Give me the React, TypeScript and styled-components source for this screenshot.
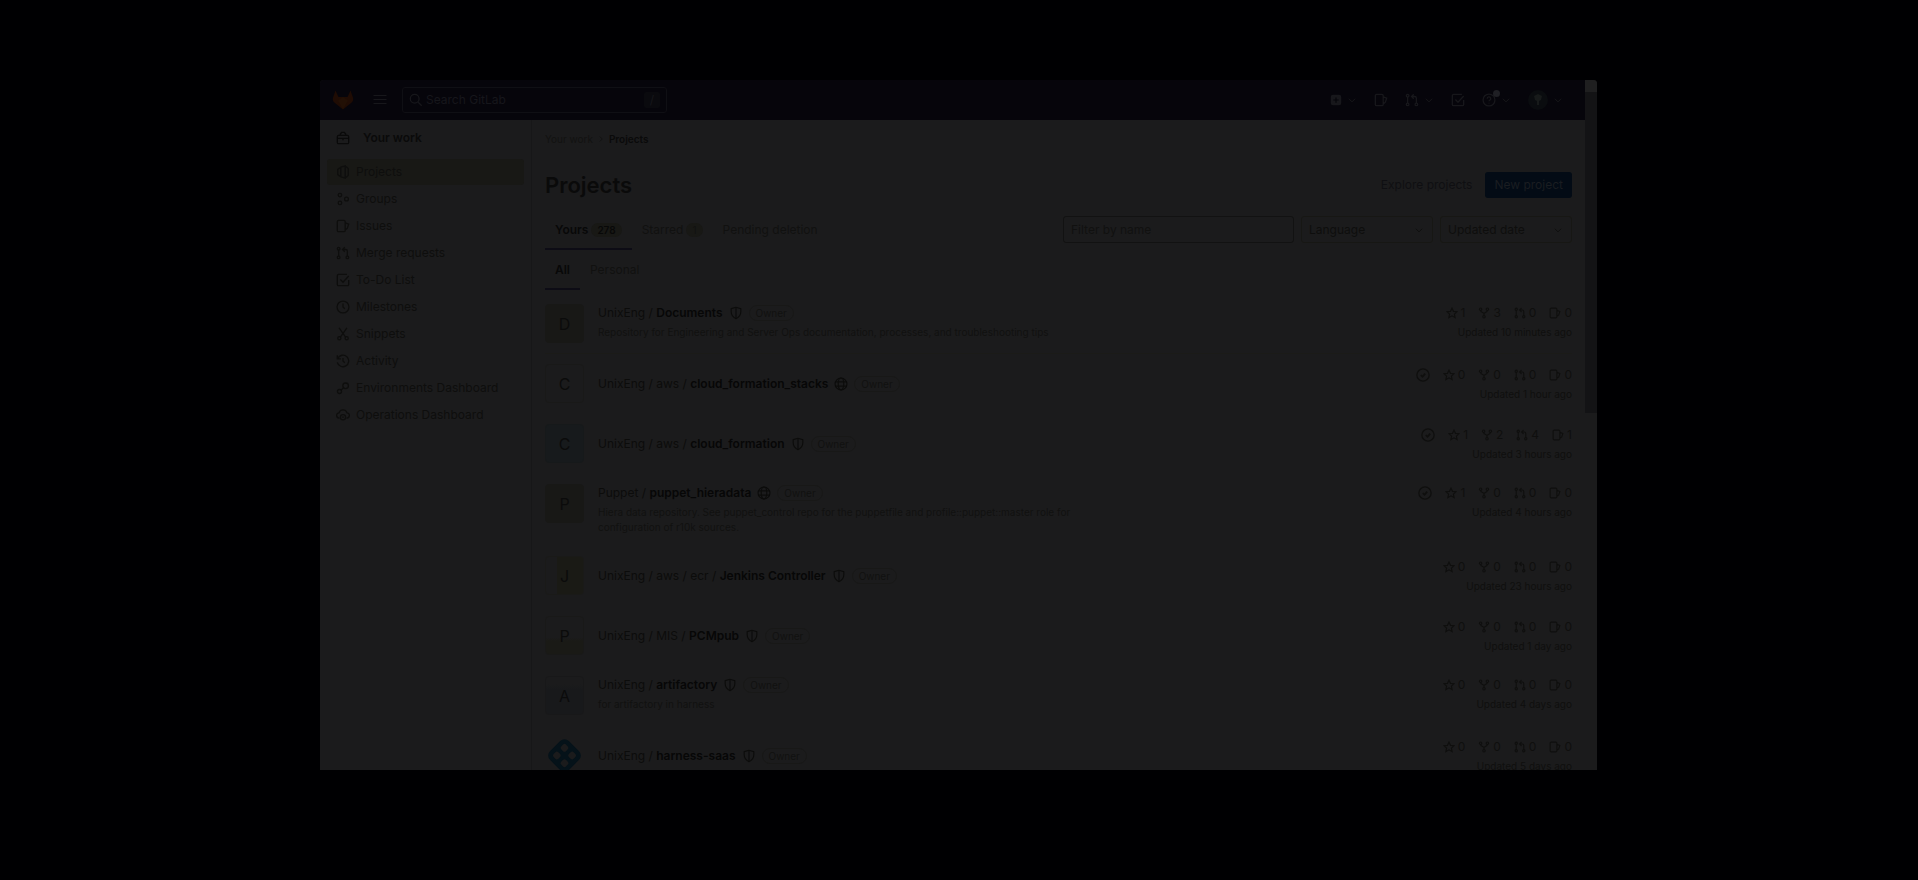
import React from "react";
import styled, { createGlobalStyle } from "styled-components";

const Global = createGlobalStyle`
  *, *::before, *::after { box-sizing: border-box; }
  html, body { margin: 0; background: #000002; }
  body { font-family: Inter, "Liberation Sans", sans-serif; font-size: 12px; line-height: 18px; color: #0c0c0b; }
  a { color: inherit; text-decoration: none; }
  button, input, select { font: inherit; color: inherit; margin: 0; }
  h1, p, ul { margin: 0; padding: 0; }
  ul { list-style: none; }
`;

const Stage = styled.div`
  height: 100vh;
  min-height: 400px;
  padding: 80px 321px 110px 320px;
  background: #000002;
`;

const Window = styled.div`
  height: 100%;
  display: flex;
  overflow: hidden;
  border-radius: 4px 4px 0 0;
  background: #1b1b1c;
`;

const Page = styled.div`
  flex: 1;
  min-width: 0;
  display: flex;
  flex-direction: column;
`;

const Scrollbar = styled.div`
  width: 12px;
  display: flex;
  flex-direction: column;
  background: #1b1b1c;
`;
const ScrollCap = styled.div`
  height: 12px;
  background: #1f1f20;
`;
const ScrollThumb = styled.div`
  height: 321px;
  background: #131315;
`;

const Header = styled.header`
  flex: none;
  height: 40px;
  display: flex;
  align-items: center;
  padding: 0 22px 0 11px;
  background: #06050b;
  color: #17171b;
`;
const LogoLink = styled.a`
  display: flex;
  width: 24px;
  margin-right: 17px;
`;
const IconButton = styled.button`
  display: flex;
  align-items: center;
  gap: 5px;
  padding: 0;
  border: 0;
  background: none;
`;
const SearchBox = styled.label`
  display: flex;
  align-items: center;
  gap: 3px;
  width: 265px;
  height: 26px;
  margin-left: 14px;
  padding: 0 6px;
  border: 1px solid #0f0f14;
  border-radius: 3px;
`;
const SearchInput = styled.input`
  flex: 1;
  min-width: 0;
  padding: 0;
  border: 0;
  outline: 0;
  background: none;
  &::placeholder { color: #16161b; opacity: 1; }
`;
const Key = styled.kbd`
  width: 16px;
  height: 16px;
  line-height: 16px;
  text-align: center;
  border-radius: 2px;
  background: #0a0a0e;
  font-family: inherit;
`;
const Actions = styled.nav`
  display: flex;
  align-items: center;
  gap: 17px;
  margin-left: auto;
`;
const HelpIcon = styled.span`
  position: relative;
  display: flex;
`;
const Dot = styled.span`
  position: absolute;
  top: -3px;
  right: -4px;
  width: 7px;
  height: 7px;
  border-radius: 50%;
  background: #1f1f24;
`;
const Face = styled.span`
  display: flex;
  align-items: center;
  justify-content: center;
  width: 20px;
  height: 20px;
  border-radius: 50%;
  background: #0a0c0f;
`;

const Body = styled.div`
  flex: 1;
  min-height: 0;
  display: flex;
`;
const Sidebar = styled.aside`
  flex: none;
  width: 212px;
  padding: 7px 7px 0;
  border-right: 1px solid #171718;
`;
const Context = styled.div`
  display: flex;
  align-items: center;
  gap: 13px;
  height: 22px;
  margin-bottom: 10px;
  padding-left: 9px;
  font-weight: 600;
  color: #0a0a0a;
`;
const NavItem = styled.a<{ $active?: boolean }>`
  display: flex;
  align-items: center;
  gap: 6px;
  height: 26px;
  margin-bottom: 1px;
  padding-left: 9px;
  border-radius: 3px;
  color: #0e0e0d;
  background: ${(p) => (p.$active ? "#181815" : "transparent")};
`;
const NavList = styled.ul`
  display: flex;
  flex-direction: column;
`;

const Main = styled.main`
  flex: 1;
  min-width: 0;
  overflow: hidden;
  padding: 10px 13px 0 13px;
`;
const Crumbs = styled.nav`
  display: flex;
  align-items: center;
  gap: 3px;
  height: 18px;
  font-size: 10px;
  color: #121211;
  strong { font-weight: 600; color: #0a0a0a; }
`;
const TitleRow = styled.div`
  display: flex;
  align-items: center;
  justify-content: space-between;
  height: 26px;
  margin: 24px 0 18px;
`;
const Title = styled.h1`
  font-size: 22px;
  line-height: 26px;
  font-weight: 600;
  color: #0a0a0a;
`;
const TitleActions = styled.div`
  display: flex;
  align-items: center;
  gap: 13px;
`;
const Explore = styled.a`
  color: #0f0f12;
`;
const Primary = styled.button`
  height: 26px;
  padding: 0 9px;
  border: 0;
  border-radius: 3px;
  background: #030b15;
  color: #1a1d21;
`;
const TabRow = styled.div`
  display: flex;
  align-items: flex-start;
  justify-content: space-between;
  margin-bottom: 6px;
`;
const Tabs = styled.div`
  display: flex;
`;
const Tab = styled.button<{ $active?: boolean }>`
  display: flex;
  align-items: center;
  gap: 3px;
  height: 34px;
  padding: 0 10px 4px;
  border: 0;
  border-bottom: 2px solid ${(p) => (p.$active ? "#0d0c15" : "transparent")};
  background: none;
  font-weight: ${(p) => (p.$active ? 600 : 400)};
  color: ${(p) => (p.$active ? "#080808" : "#111110")};
`;
const Count = styled.span`
  padding: 0 6px;
  border-radius: 7px;
  line-height: 14px;
  font-size: 10px;
  background: #181815;
`;
const Filters = styled.div`
  display: flex;
  gap: 7px;
`;
const FilterInput = styled.input`
  width: 231px;
  height: 27px;
  padding: 0 7px;
  border: 1px solid #121212;
  border-radius: 3px;
  outline: 0;
  background: transparent;
  &::placeholder { color: #111110; opacity: 1; }
`;
const SelectBox = styled.label`
  position: relative;
  width: 132px;
  height: 27px;
  color: #0e0e0d;
  svg { position: absolute; right: 9px; top: 9px; pointer-events: none; }
`;
const Select = styled.select`
  appearance: none;
  width: 100%;
  height: 100%;
  padding: 0 7px;
  border: 1px solid #171714;
  border-radius: 3px;
  background: transparent;
`;

const List = styled.ul`
  margin-top: 4px;
`;
const Row = styled.li<{ $top?: boolean; $line?: boolean }>`
  display: flex;
  align-items: ${(p) => (p.$top ? "flex-start" : "center")};
  min-height: 60px;
  padding: 10px 0;
  border-bottom: 1px solid ${(p) => (p.$line ? "#1b1b18" : "transparent")};
`;
const Avatar = styled.span<{ $bg: string; $edge: string }>`
  flex: none;
  display: flex;
  align-items: center;
  justify-content: center;
  width: 39px;
  height: 39px;
  margin-right: 10px;
  border: 1px solid ${(p) => p.$edge};
  border-radius: 4px;
  background: ${(p) => p.$bg};
  font-size: 16px;
  color: #0b0b0b;
`;
const Info = styled.div`
  width: 484px;
  min-width: 0;
  padding-left: 4px;
`;
const Name = styled.div`
  display: flex;
  align-items: center;
  gap: 6px;
  height: 18px;
  white-space: nowrap;
  strong { font-weight: 600; color: #070707; }
`;
const Badge = styled.span`
  height: 16px;
  padding: 0 6px;
  border: 1px solid #181817;
  border-radius: 8px;
  line-height: 14px;
  font-size: 10px;
  color: #111110;
`;
const Description = styled.p`
  margin-top: 3px;
  font-size: 10px;
  line-height: 15px;
  color: #111110;
`;
const Meta = styled.div`
  margin-left: auto;
  text-align: right;
  color: #0f0f0e;
`;
const Stats = styled.div`
  display: flex;
  justify-content: flex-end;
  align-items: center;
  gap: 13px;
  height: 18px;
`;
const Stat = styled.a`
  display: flex;
  align-items: center;
  gap: 3px;
`;
const Updated = styled.div`
  padding-top: 2px;
  font-size: 10px;
  line-height: 16px;
`;

const shapes: Record<string, React.ReactNode> = {
  work: <><rect x="1.5" y="5" width="13" height="9.5" rx="1.5" /><path d="M5 5V3.5L6.5 1.5h3L11 3.5V5M1.5 8.5h13M8 8.5v2" /></>,
  project: <path d="M5.500 2.500 10.500 1v14l-5-1.500zM5.500 2.500 2 5v6l3.500 2.500M10.500 1 14 4v8l-3.500 3" />,
  group: <><circle cx="4.5" cy="3.5" r="2" /><circle cx="4.5" cy="12.5" r="2" /><circle cx="12" cy="8" r="2.2" /></>,
  issue: <path d="M3 1.500h6a1.500 1.500 0 0 1 1.500 1.500v10A1.500 1.500 0 0 1 9 14.500H3A1.500 1.500 0 0 1 1.500 13V3A1.500 1.500 0 0 1 3 1.500zM10.500 4.500l4 1.500-1.500 4.500-2.500 2" />,
  merge: <><circle cx="3" cy="3" r="1.5" /><circle cx="3" cy="13" r="1.5" /><circle cx="13" cy="13" r="1.5" /><path d="M3 4.500v7M13 11.500V6a2 2 0 0 0-2-2H8M10 1.500 7.500 4 10 6.500" /></>,
  todo: <path d="M14.500 8v5a1.500 1.500 0 0 1-1.500 1.500H3A1.500 1.500 0 0 1 1.500 13V3A1.500 1.500 0 0 1 3 1.500h9.500M5 7.500 8 10.500l6.500-7" />,
  clock: <><circle cx="8" cy="8" r="6.8" /><path d="M8 4v4l2 2" /></>,
  snippet: <><circle cx="3.8" cy="12.8" r="1.8" /><circle cx="12.2" cy="12.8" r="1.8" /><path d="M3.500 1 11 11.500M12.500 1 5 11.500" /></>,
  history: <path d="M2 5a6.600 6.600 0 1 1-.5 4.500M1.500 1.500V5.500h4M8 4.500V8l2 2" />,
  environment: <><circle cx="11" cy="5.5" r="3.2" /><circle cx="4" cy="12" r="2.3" /><path d="M5.800 10.300 8.500 8" /></>,
  operations: <><path d="M4 11.500a3 3 0 0 1-.5-6 4.700 4.700 0 0 1 9 0 3 3 0 0 1-.5 6" /><circle cx="8" cy="10.5" r="3" /><circle cx="8" cy="10.5" r=".3" /></>,
  search: <><circle cx="6.5" cy="6.5" r="5" /><path d="m10.500 10.500 4 4" /></>,
  menu: <path strokeWidth="1.2" d="M1.500 3.500h13M1.500 7.500h13M1.500 11.500h13" />,
  chevron: <path d="m3 6 5 5 5-5" />,
  right: <path d="m6 4 4 4-4 4" />,
  plus: <path fillRule="evenodd" fill="currentColor" stroke="none" d="M4 1h8a3 3 0 0 1 3 3v8a3 3 0 0 1-3 3H4a3 3 0 0 1-3-3V4a3 3 0 0 1 3-3zm3.200 3.500v2.700H4.500v1.600h2.700v2.700h1.600V8.800h2.700V7.200H8.800V4.500z" />,
  help: <><circle cx="8" cy="8" r="6.8" /><path d="M6 6.500a2 2 0 1 1 2.800 1.800c-.6.300-.8.600-.8 1.200M8 11v1" /></>,
  shield: <path strokeWidth="1.3" d="M8 1.500v13M2.500 3 8 1.500 13.500 3v3.500c0 4-2.500 6.500-5.500 8-3-1.500-5.500-4-5.500-8z" />,
  globe: <g strokeWidth="1.3"><circle cx="8" cy="8" r="6.8" /><ellipse cx="8" cy="8" rx="3.2" ry="6.8" /><path d="M2 5.500h12M2 10.500h12" /></g>,
  star: <path d="m8 1.500 2 4.300 4.700.5-3.500 3.200 1 4.700L8 11.800l-4.200 2.400 1-4.700L1.300 6.300 6 5.800z" />,
  fork: <><circle cx="3.5" cy="3" r="1.6" /><circle cx="12.5" cy="3" r="1.6" /><circle cx="8" cy="13" r="1.6" /><path d="M3.500 4.600C3.500 7.500 8 7 8 9v2.400M12.500 4.600C12.500 7.500 8 7 8 9" /></>,
  check: <><circle cx="8" cy="8" r="7" /><path strokeWidth="2" d="m5.500 8 2 2 3-3.500" /></>,
};

const Icon = ({ name, size = 14 }: { name: string; size?: number }) => (
  <svg width={size} height={size} viewBox="0 0 16 16" fill="none" stroke="currentColor" strokeWidth="1.5" aria-hidden="true">
    {shapes[name]}
  </svg>
);

const Tanuki = () => (
  <svg width="24" height="24" viewBox="0 0 24 24" aria-hidden="true">
    <path fill="#1f0c04" d="M4.500 2.500 2 9.500c-.6 2 0 4 1.600 5.200L12 21.500l8.400-6.800C22 13.500 22.600 11.500 22 9.500l-2.500-7-3 6.500h-9z" />
    <path fill="#221005" d="m7 12.500 5 9 5-9-5-3.500z" />
  </svg>
);

const HarnessLogo = () => (
  <svg width="37" height="37" viewBox="0 0 36 36" aria-hidden="true">
    <rect x="5" y="5" width="26" height="26" rx="6" fill="#051219" transform="rotate(45 18 18)" />
    <g fill="#1b1b1c" transform="rotate(45 18 18)">
      <rect x="9.5" y="9.5" width="6.5" height="6.5" rx="2" />
      <rect x="20" y="9.5" width="6.5" height="6.5" rx="2" />
      <rect x="9.5" y="20" width="6.5" height="6.5" rx="2" />
      <rect x="20" y="20" width="6.5" height="6.5" rx="2" />
    </g>
  </svg>
);

const nav = [
  ["project", "Projects"], ["group", "Groups"], ["issue", "Issues"], ["merge", "Merge requests"],
  ["todo", "To-Do List"], ["clock", "Milestones"], ["snippet", "Snippets"], ["history", "Activity"],
  ["environment", "Environments Dashboard"], ["operations", "Operations Dashboard"],
];

type Project = {
  path: string; name: string; letter: string; bg: string; edge: string; icon: string;
  text?: string; passed?: boolean; stats: number[]; updated: string;
};
const projects: Project[] = [
  { path: "UnixEng / ", name: "Documents", letter: "D", bg: "#181816", edge: "#181816", icon: "shield", text: "Repository for Engineering and Server Ops documentation, processes, and troubleshooting tips", stats: [1, 3, 0, 0], updated: "10 minutes ago" },
  { path: "UnixEng / aws / ", name: "cloud_formation_stacks", letter: "C", bg: "#1b1b1c", edge: "#191918", icon: "globe", passed: true, stats: [0, 0, 0, 0], updated: "1 hour ago" },
  { path: "UnixEng / aws / ", name: "cloud_formation", letter: "C", bg: "#171a1c", edge: "#16191a", icon: "shield", passed: true, stats: [1, 2, 4, 1], updated: "3 hours ago" },
  { path: "Puppet / ", name: "puppet_hieradata", letter: "P", bg: "#181816", edge: "#181816", icon: "globe", text: "Hiera data repository. See puppet_control repo for the puppetfile and profile::puppet::master role for configuration of r10k sources.", passed: true, stats: [1, 0, 0, 0], updated: "4 hours ago" },
  { path: "UnixEng / aws / ecr / ", name: "Jenkins Controller", letter: "J", bg: "linear-gradient(90deg, #1b1b1c 30%, #1a1a15 30%)", edge: "#1a1a18", icon: "shield", stats: [0, 0, 0, 0], updated: "23 hours ago" },
  { path: "UnixEng / MIS / ", name: "PCMpub", letter: "P", bg: "linear-gradient(#1b1b1c 55%, #1a1a16 65%)", edge: "#191918", icon: "shield", stats: [0, 0, 0, 0], updated: "1 day ago" },
  { path: "UnixEng / ", name: "artifactory", letter: "A", bg: "linear-gradient(#1b1b1c 20%, #18191b 35%)", edge: "#181819", icon: "shield", text: "for artifactory in harness", stats: [0, 0, 0, 0], updated: "4 days ago" },
  { path: "UnixEng / ", name: "harness-saas", letter: "", bg: "transparent", edge: "transparent", icon: "shield", stats: [0, 0, 0, 0], updated: "5 days ago" },
];
const statIcons: [string, string][] = [["star", "Stars"], ["fork", "Forks"], ["merge", "Merge requests"], ["issue", "Issues"]];

const ProjectRow = ({ project: p, line }: { project: Project; line: boolean }) => (
  <Row $top={!!p.text} $line={line}>
    <Avatar $bg={p.bg} $edge={p.edge}>{p.letter || <HarnessLogo />}</Avatar>
    <Info>
      <Name>
        <a href="#project"><span>{p.path}</span><strong>{p.name}</strong></a>
        <Icon name={p.icon} />
        <Badge>Owner</Badge>
      </Name>
      {p.text && <Description>{p.text}</Description>}
    </Info>
    <Meta>
      <Stats>
        {p.passed && <Icon name="check" />}
        {p.stats.map((n, i) => (
          <Stat key={i} href="#stats" aria-label={statIcons[i][1]}>
            <Icon name={statIcons[i][0]} size={12} />{n}
          </Stat>
        ))}
      </Stats>
      <Updated>Updated {p.updated}</Updated>
    </Meta>
  </Row>
);

export default function App() {
  return (
    <>
      <Global />
      <Stage>
        <Window>
          <Page>
            <Header>
              <LogoLink href="#home" aria-label="Home"><Tanuki /></LogoLink>
              <IconButton aria-label="Menu"><Icon name="menu" size={16} /></IconButton>
              <SearchBox>
                <Icon name="search" />
                <SearchInput placeholder="Search GitLab" aria-label="Search GitLab" />
                <Key>/</Key>
              </SearchBox>
              <Actions>
                <IconButton aria-label="Create"><Icon name="plus" size={12} /><Icon name="chevron" size={10} /></IconButton>
                <IconButton aria-label="Issues"><Icon name="issue" /></IconButton>
                <IconButton aria-label="Merge requests"><Icon name="merge" /><Icon name="chevron" size={10} /></IconButton>
                <IconButton aria-label="To-Do List"><Icon name="todo" /></IconButton>
                <IconButton aria-label="Help"><HelpIcon><Icon name="help" /><Dot /></HelpIcon><Icon name="chevron" size={10} /></IconButton>
                <IconButton aria-label="Account">
                  <Face><svg width="10" height="12" viewBox="0 0 10 12" fill="#171a1a" aria-hidden="true"><path d="M1 2 5 0l4 2-1 4-2 1v4H4V7L2 6z" /></svg></Face>
                  <Icon name="chevron" size={10} />
                </IconButton>
              </Actions>
            </Header>
            <Body>
              <Sidebar>
                <Context><Icon name="work" />Your work</Context>
                <NavList>
                  {nav.map(([icon, label], i) => (
                    <li key={label}><NavItem href="#nav" $active={i === 0}><Icon name={icon} />{label}</NavItem></li>
                  ))}
                </NavList>
              </Sidebar>
              <Main>
                <Crumbs aria-label="Breadcrumb"><a href="#work">Your work</a><Icon name="right" size={10} /><strong>Projects</strong></Crumbs>
                <TitleRow>
                  <Title>Projects</Title>
                  <TitleActions><Explore href="#explore">Explore projects</Explore><Primary>New project</Primary></TitleActions>
                </TitleRow>
                <TabRow>
                  <Tabs>
                    <Tab $active>Yours <Count>278</Count></Tab>
                    <Tab>Starred <Count>1</Count></Tab>
                    <Tab>Pending deletion</Tab>
                  </Tabs>
                  <Filters>
                    <FilterInput placeholder="Filter by name" aria-label="Filter by name" />
                    <SelectBox><Select aria-label="Language"><option>Language</option></Select><Icon name="chevron" size={10} /></SelectBox>
                    <SelectBox><Select aria-label="Sort by"><option>Updated date</option></Select><Icon name="chevron" size={10} /></SelectBox>
                  </Filters>
                </TabRow>
                <Tabs><Tab $active>All</Tab><Tab>Personal</Tab></Tabs>
                <List>{projects.map((p, i) => <ProjectRow key={p.name} project={p} line={i === 0} />)}</List>
              </Main>
            </Body>
          </Page>
          <Scrollbar><ScrollCap /><ScrollThumb /></Scrollbar>
        </Window>
      </Stage>
    </>
  );
}
